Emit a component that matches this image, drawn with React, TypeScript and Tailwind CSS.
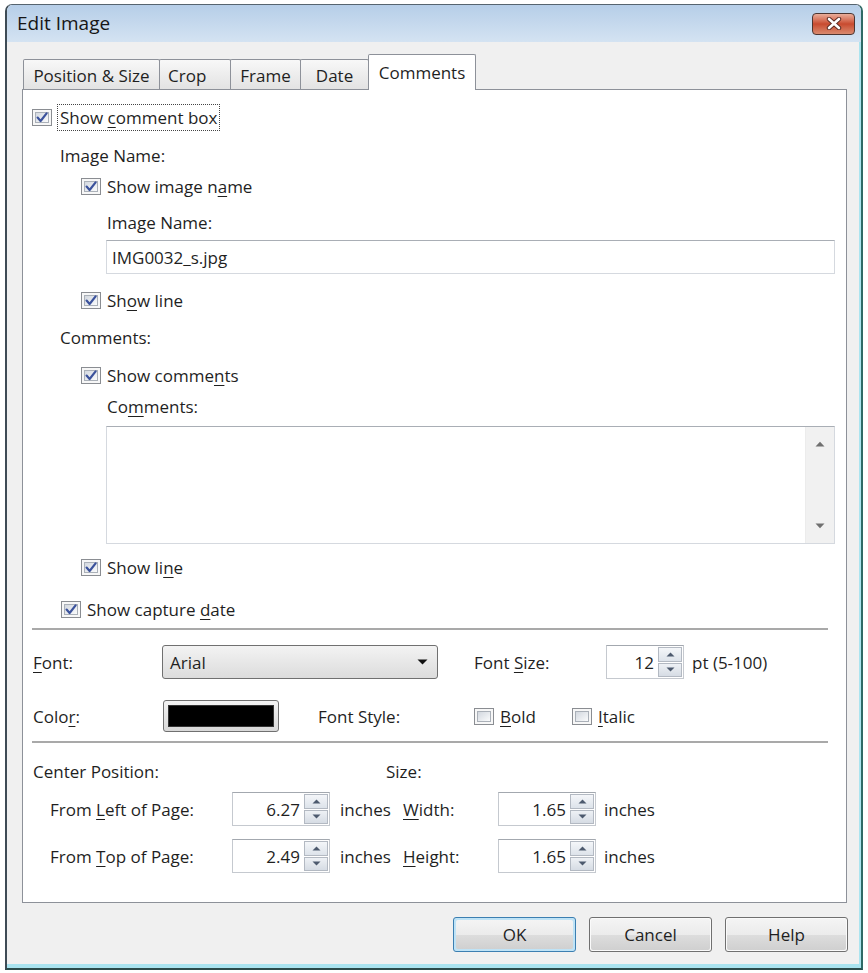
import React from "react";

const U = ({ children }: { children: React.ReactNode }) => (
  <span className="underline underline-offset-[3px] decoration-[1px]">{children}</span>
);

function Check({ checked = false }: { checked?: boolean }) {
  return (
    <div className="w-[20px] h-[17px] shrink-0 border border-[#8a8d92] bg-[#f7f7f7] p-[2px]">
      <div className="w-full h-full border border-[#aab0b8] bg-gradient-to-br from-[#d3d8df] to-[#fafbfc] flex items-center justify-center">
        {checked && (
          <svg width="12" height="11" viewBox="0 0 12 11">
            <path d="M1.6 5.6 L4.6 9 L10.6 1.4" fill="none" stroke="#3b529c" strokeWidth="2.2" strokeLinecap="round" strokeLinejoin="round" />
          </svg>
        )}
      </div>
    </div>
  );
}

function SpinBtns() {
  return (
    <div className="w-[26px] shrink-0 flex flex-col p-[1px] gap-[1px] bg-white">
      <div className="flex-1 border border-[#b3b9c2] bg-gradient-to-b from-[#f4f6f9] to-[#dde3ea] flex items-center justify-center">
        <svg width="9" height="5" viewBox="0 0 9 5">
          <path d="M0.5 4.5 L4.5 0.5 L8.5 4.5 Z" fill="#4d5a6e" />
        </svg>
      </div>
      <div className="flex-1 border border-[#b3b9c2] bg-gradient-to-b from-[#eef1f5] to-[#d6dce4] flex items-center justify-center">
        <svg width="9" height="5" viewBox="0 0 9 5">
          <path d="M0.5 0.5 L4.5 4.5 L8.5 0.5 Z" fill="#4d5a6e" />
        </svg>
      </div>
    </div>
  );
}

function Spin({ value, wide }: { value: string; wide?: boolean }) {
  return (
    <div
      className={
        wide
          ? "w-[98px] h-[34px] shrink-0 flex border border-[#c5c9cf] border-t-[#a3a8af] bg-white"
          : "w-[78px] h-[34px] shrink-0 flex border border-[#c5c9cf] border-t-[#a3a8af] bg-white"
      }
    >
      <div className="flex-1 flex items-center justify-end pr-[3px]">{value}</div>
      <SpinBtns />
    </div>
  );
}

function Btn({ label, def }: { label: string; def?: boolean }) {
  return (
    <div
      className={
        def
          ? "w-[123px] h-[35px] rounded-[3px] border border-[#3c7fb1] p-[2px] bg-[#bfe3f6]"
          : "w-[123px] h-[35px] rounded-[3px] border border-[#707070] p-[1px] bg-[#fafafa]"
      }
    >
      <div className="w-full h-full rounded-[2px] flex flex-col overflow-hidden relative">
        <div className="flex-1 bg-gradient-to-b from-[#f4f4f4] to-[#ebebeb]" />
        <div className="flex-1 bg-gradient-to-b from-[#dddddd] to-[#d0d0d0]" />
        <div className="absolute inset-0 flex items-center justify-center">{label}</div>
      </div>
    </div>
  );
}

function CloseBtn() {
  return (
    <div className="w-[43px] h-[22px] rounded-[4px] border border-[#4d3531] bg-gradient-to-b from-[#e9ad9a] via-[#c84a2f] to-[#d98a6f] flex items-center justify-center">
      <svg width="16" height="13" viewBox="0 0 16 13">
        <path d="M3 2 L13 11 M13 2 L3 11" stroke="#5a2a22" strokeWidth="4.4" strokeLinecap="round" />
        <path d="M3 2 L13 11 M13 2 L3 11" stroke="#ffffff" strokeWidth="2.6" strokeLinecap="round" />
      </svg>
    </div>
  );
}

function Tab({ label, cls }: { label: string; cls: string }) {
  return (
    <div
      className={
        "h-[31px] border border-b-0 border-[#8d9199] bg-gradient-to-b from-[#f8f8f8] to-[#e2e2e2] flex items-center justify-center rounded-t-[2px] " +
        cls
      }
    >
      {label}
    </div>
  );
}

export default function App() {
  return (
    <div className="w-[868px] h-[973px] bg-white pt-[4px] pl-[5px] font-['Open_Sans','Noto_Sans',sans-serif] text-[17px] text-[#1f1f1f] leading-none">
      <div className="w-[858px] h-[966px] flex flex-col border-t border-l-[2px] border-r-[2px] border-b-[2px] border-t-[#56646f] border-l-[#3e4b55] border-r-[#2f6a66] border-b-[#2b4b4b] rounded-t-[7px] overflow-hidden">
        {/* title bar */}
        <div className="h-[37px] shrink-0 bg-gradient-to-b from-[#b6cee8] to-[#d4e3f2] flex items-center justify-between pl-[10px] pr-[6px]">
          <span className="text-[19px] text-[#161616]">Edit Image</span>
          <CloseBtn />
        </div>

        {/* client area */}
        <div className="flex-1 bg-[#f0f0f0] border-r-[2px] border-r-[#abe4ef] flex flex-col pl-[15px] pt-[12px]">
          {/* tabs */}
          <div className="h-[36px] flex items-end pl-[1px]">
            <Tab label="Position & Size" cls="w-[137px]" />
            <Tab label="Crop" cls="w-[72px] -ml-[1px] justify-start pl-[8px]" />
            <Tab label="Frame" cls="w-[71px] -ml-[1px]" />
            <Tab label="Date" cls="w-[69px] -ml-[1px]" />
            <div className="relative z-10 -ml-[1px] w-[108px] h-[36px] border border-b-0 border-[#8d9199] bg-white flex items-center justify-center rounded-t-[2px]">
              Comments
            </div>
          </div>

          {/* panel */}
          <div className="-mt-[1px] w-[825px] h-[814px] border border-[#8d9199] bg-white flex flex-col">
            <div className="mt-[13px] h-[28px] flex items-center ml-[9px]">
              <Check checked />
              <span className="ml-[5px] border border-dotted border-[#444] px-[2px] py-[4px]">
                Show <U>c</U>omment box
              </span>
            </div>
            <div className="mt-[10px] h-[28px] flex items-center ml-[37px]">Image Name:</div>
            <div className="mt-[3px] h-[28px] flex items-center ml-[58px]">
              <Check checked />
              <span className="ml-[6px]">
                Show image n<U>a</U>me
              </span>
            </div>
            <div className="mt-[8px] h-[28px] flex items-center ml-[84px]">Image Name:</div>
            <div className="mt-[4px] h-[34px] ml-[83px] mr-[11px] border border-[#d5d9df] border-t-[#a9aeb5] bg-white flex items-center pl-[5px]">
              IMG0032_s.jpg
            </div>
            <div className="mt-[12px] h-[28px] flex items-center ml-[58px]">
              <Check checked />
              <span className="ml-[6px]">
                Sh<U>o</U>w line
              </span>
            </div>
            <div className="mt-[9px] h-[28px] flex items-center ml-[37px]">Comments:</div>
            <div className="mt-[10px] h-[28px] flex items-center ml-[58px]">
              <Check checked />
              <span className="ml-[6px]">
                Show comme<U>n</U>ts
              </span>
            </div>
            <div className="mt-[3px] h-[28px] flex items-center ml-[84px]">
              Co<U>m</U>ments:
            </div>
            <div className="mt-[6px] h-[118px] ml-[83px] mr-[11px] border border-[#d5d9df] border-t-[#a9aeb5] bg-white flex justify-end">
              <div className="w-[29px] bg-[#f1f1f1] border-l border-[#ececec] flex flex-col justify-between items-center py-[14px]">
                <svg width="10" height="6" viewBox="0 0 10 6">
                  <path d="M0.5 5.5 L5 0.8 L9.5 5.5 Z" fill="#707070" />
                </svg>
                <svg width="10" height="6" viewBox="0 0 10 6">
                  <path d="M0.5 0.5 L5 5.2 L9.5 0.5 Z" fill="#707070" />
                </svg>
              </div>
            </div>
            <div className="mt-[9px] h-[28px] flex items-center ml-[58px]">
              <Check checked />
              <span className="ml-[6px]">
                Show li<U>n</U>e
              </span>
            </div>
            <div className="mt-[14px] h-[28px] flex items-center ml-[38px]">
              <Check checked />
              <span className="ml-[6px]">
                Show capture <U>d</U>ate
              </span>
            </div>
            <div className="mt-[5px] h-[2px] ml-[9px] w-[796px] bg-[#a9a9a9]" />

            {/* font row */}
            <div className="mt-[15px] h-[34px] flex items-center ml-[10px]">
              <div className="w-[129px]">
                <U>F</U>ont:
              </div>
              <div className="w-[276px] h-[34px] rounded-[3px] border border-[#707070] bg-gradient-to-b from-[#f3f3f3] to-[#dcdcdc] flex items-center justify-between pl-[7px] pr-[9px]">
                <span>Arial</span>
                <svg width="11" height="6" viewBox="0 0 11 6">
                  <path d="M0.5 0.5 L5.5 5.5 L10.5 0.5 Z" fill="#111" />
                </svg>
              </div>
              <div className="ml-[36px] w-[132px]">
                Font <U>S</U>ize:
              </div>
              <Spin value="12" />
              <div className="ml-[8px]">pt (5-100)</div>
            </div>

            {/* color row */}
            <div className="mt-[20px] h-[34px] flex items-center ml-[10px]">
              <div className="w-[130px]">
                Colo<U>r</U>:
              </div>
              <div className="w-[116px] h-[32px] rounded-[3px] border border-[#707070] bg-gradient-to-b from-[#f3f3f3] to-[#d8d8d8] p-[4px]">
                <div className="w-full h-full bg-black border border-[#333]" />
              </div>
              <div className="ml-[39px] w-[156px]">Font Style:</div>
              <div className="w-[98px] flex items-center">
                <Check />
                <span className="ml-[6px]">
                  <U>B</U>old
                </span>
              </div>
              <div className="flex items-center">
                <Check />
                <span className="ml-[6px]">
                  <U>I</U>talic
                </span>
              </div>
            </div>
            <div className="mt-[8px] h-[2px] ml-[9px] w-[796px] bg-[#a9a9a9]" />

            {/* position */}
            <div className="mt-[14px] h-[28px] flex items-center ml-[10px]">
              <div className="w-[353px]">Center Position:</div>
              <div>Size:</div>
            </div>
            <div className="mt-[7px] h-[34px] flex items-center ml-[27px]">
              <div className="w-[182px]">
                From <U>L</U>eft of Page:
              </div>
              <Spin value="6.27" wide />
              <div className="ml-[10px] w-[63px]">inches</div>
              <div className="w-[95px]">
                <U>W</U>idth:
              </div>
              <Spin value="1.65" wide />
              <div className="ml-[8px]">inches</div>
            </div>
            <div className="mt-[13px] h-[34px] flex items-center ml-[27px]">
              <div className="w-[182px]">
                From <U>T</U>op of Page:
              </div>
              <Spin value="2.49" wide />
              <div className="ml-[10px] w-[63px]">inches</div>
              <div className="w-[95px]">
                <U>H</U>eight:
              </div>
              <Spin value="1.65" wide />
              <div className="ml-[8px]">inches</div>
            </div>
          </div>

          {/* buttons */}
          <div className="mt-[14px] w-[826px] flex justify-end gap-[13px]">
            <Btn label="OK" def />
            <Btn label="Cancel" />
            <Btn label="Help" />
          </div>
        </div>
        <div className="h-[4px] shrink-0 bg-[#a9e3ef]" />
      </div>
    </div>
  );
}
